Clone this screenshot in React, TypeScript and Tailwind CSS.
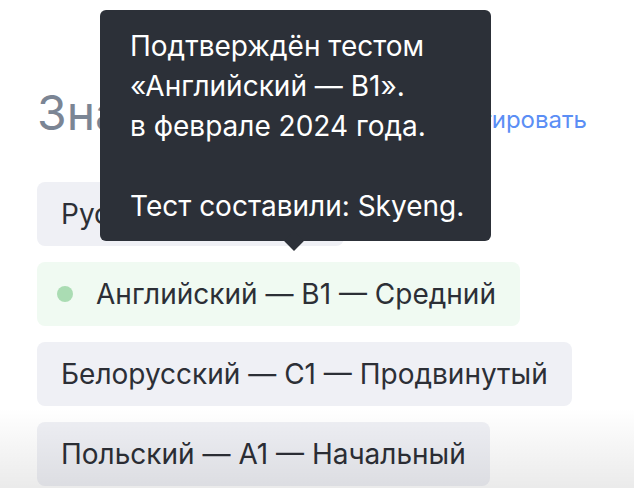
const languages = [
  { id: 1, label: "Русский — Родной", confirmed: false },
  { id: 2, label: "Английский — B1 — Средний", confirmed: true },
  { id: 3, label: "Белорусский — C1 — Продвинутый", confirmed: false },
  { id: 4, label: "Польский — A1 — Начальный", confirmed: false },
];

function LanguageChip({ label, confirmed }: { label: string; confirmed: boolean }) {
  if (confirmed) {
    return (
      <div className="flex items-center h-16 pl-5 pr-6 rounded-lg bg-[#f0faf2]">
        <span className="w-4 h-4 rounded-full bg-[#aadcb3]" />
        <span className="ml-[23px] text-[28px] text-[#2c2f36]">{label}</span>
      </div>
    );
  }
  return (
    <div className="flex items-center h-16 px-6 rounded-lg bg-[#eff0f5] text-[28px] text-[#2c2f36]">
      {label}
    </div>
  );
}

export default function App() {
  return (
    <div
      className="relative w-[634px] h-[488px] overflow-hidden bg-white pl-[37px] pr-[47px]"
      style={{ fontFamily: "Inter, 'Noto Sans', sans-serif" }}
    >
      <div className="flex items-baseline justify-between pt-[85px]">
        <h2 className="text-[48px] leading-[56px] text-[#7b8594] font-normal">Знания языков</h2>
        <a className="relative -top-[2px] text-[24px] text-[#5b8ef5]">Редактировать</a>
      </div>

      <div className="flex flex-col items-start gap-4 mt-[41px]">
        {languages.map((lang) => (
          <LanguageChip key={lang.id} label={lang.label} confirmed={lang.confirmed} />
        ))}
      </div>

      {/* tooltip over the confirmed language */}
      <div className="absolute left-[100px] top-[10px] w-[391px] h-[231px] rounded-md bg-[#2c3038] pl-[30px] pt-4 whitespace-nowrap text-[28px] leading-[40px] text-white">
        <p>Подтверждён тестом</p>
        <p>«Английский — B1».</p>
        <p>в феврале 2024 года.</p>
        <p>&nbsp;</p>
        <p>Тест составили: Skyeng.</p>
        <div className="absolute left-[187px] -bottom-[7px] w-[14px] h-[14px] rotate-45 bg-[#2c3038]" />
      </div>

      <div className="pointer-events-none absolute left-0 right-0 bottom-0 h-[80px] bg-linear-to-b from-transparent to-black/[0.08]" />
    </div>
  );
}
